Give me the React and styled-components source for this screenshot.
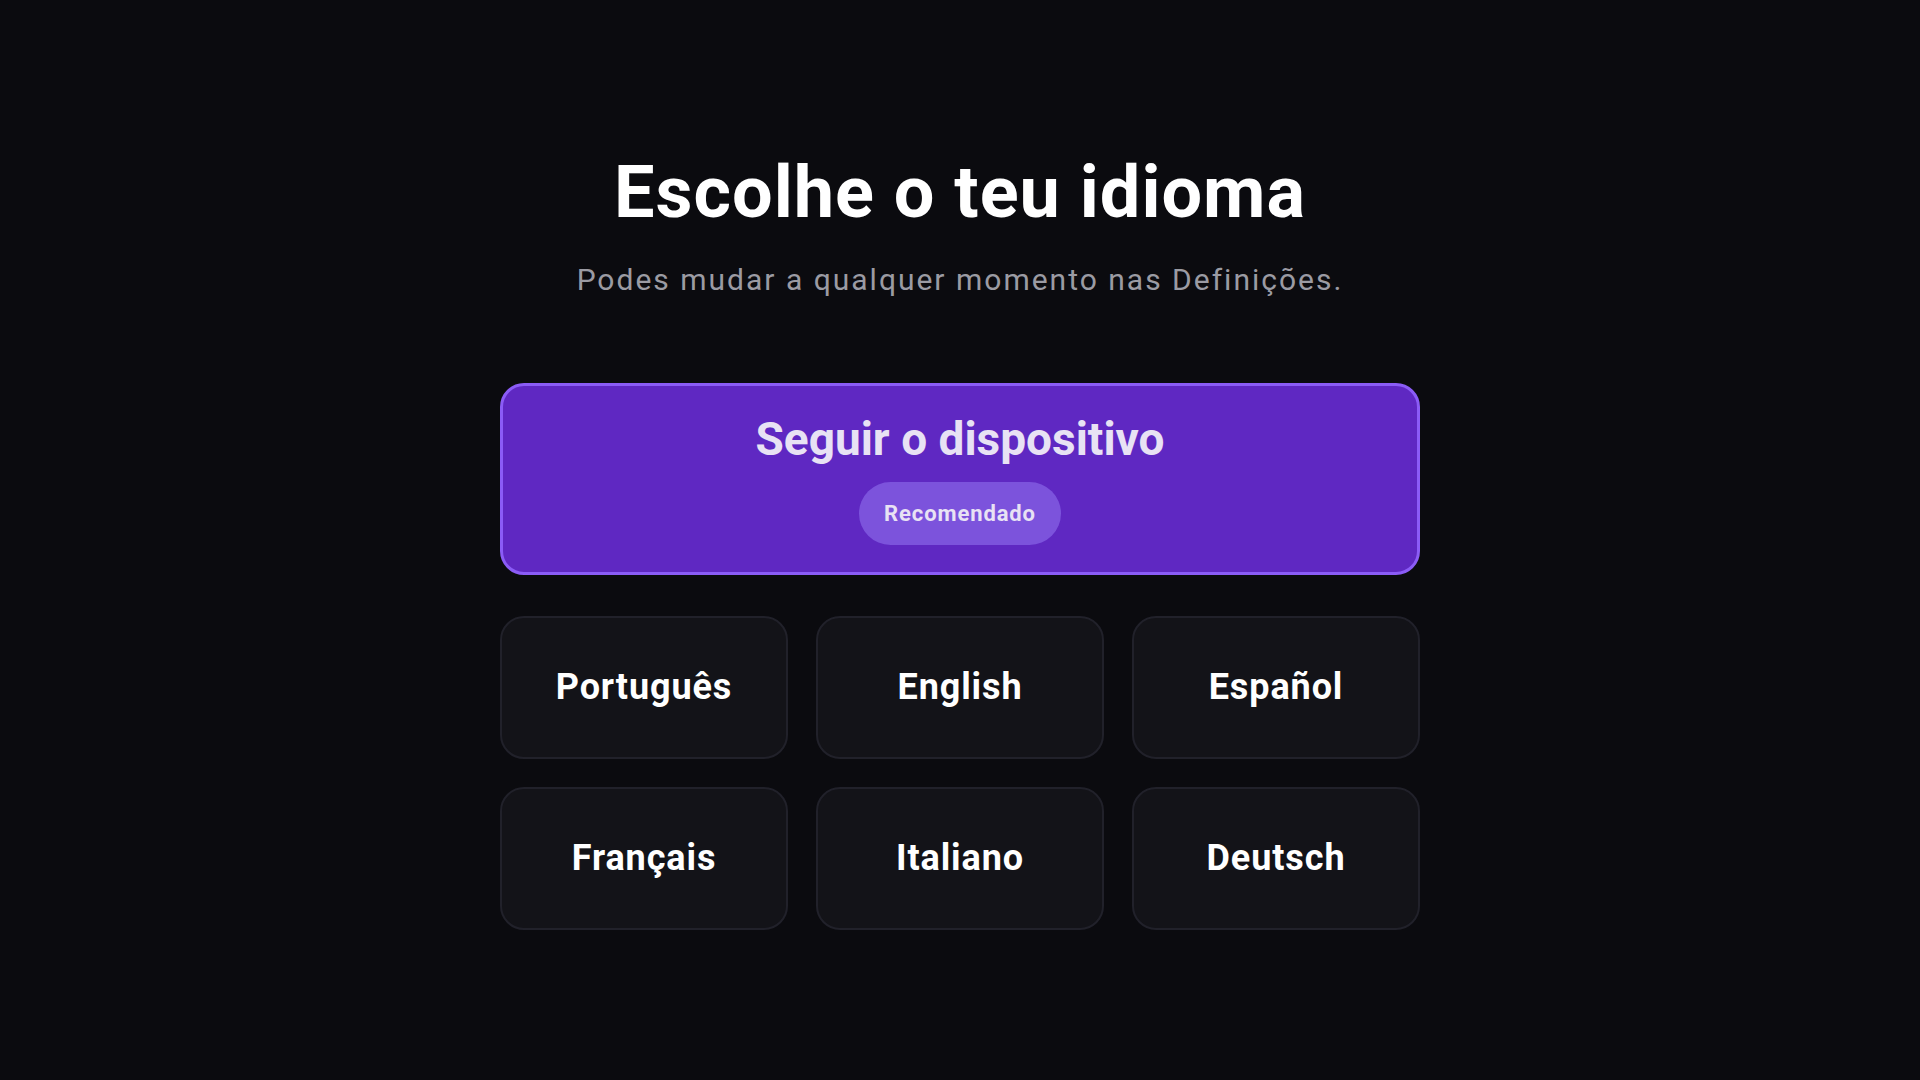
import React, { useState } from 'react';
import styled, { createGlobalStyle } from 'styled-components';

const GlobalStyle = createGlobalStyle`
  * {
    box-sizing: border-box;
  }
  html, body {
    margin: 0;
    padding: 0;
    background: #0b0b0f;
    font-family: Roboto, "Noto Sans", "Liberation Sans", sans-serif;
  }
`;

const Page = styled.main`
  min-height: 100vh;
  display: flex;
  align-items: center;
  justify-content: center;
  background: #0b0b0f;
`;

const Content = styled.section`
  width: 920px;
  display: flex;
  flex-direction: column;
  align-items: stretch;
`;

const Title = styled.h1`
  margin: 0;
  font-size: 72px;
  line-height: 1.2;
  font-weight: 700;
  letter-spacing: 1px;
  color: #ffffff;
  text-align: center;
`;

const Subtitle = styled.p`
  margin: 22px 0 0;
  font-size: 30px;
  line-height: 1.4;
  font-weight: 400;
  letter-spacing: 2px;
  color: #9b9ba3;
  text-align: center;
`;

const DeviceOption = styled.button`
  margin-top: 82px;
  height: 192px;
  display: flex;
  flex-direction: column;
  align-items: center;
  justify-content: center;
  gap: 16px;
  background: #5f28c2;
  border: 3px solid #8b5cf6;
  border-radius: 24px;
  cursor: pointer;
  font-family: inherit;
`;

const DeviceLabel = styled.span`
  font-size: 46px;
  line-height: 1.15;
  font-weight: 700;
  color: #e8e2f4;
`;

const Badge = styled.span`
  height: 63px;
  padding: 0 25px;
  display: inline-flex;
  align-items: center;
  border-radius: 32px;
  background: #7c53dc;
  color: #e8e2f4;
  font-size: 22px;
  font-weight: 700;
  letter-spacing: 0.04em;
`;

const Grid = styled.div`
  margin-top: 41px;
  display: grid;
  grid-template-columns: repeat(3, 1fr);
  gap: 28px;
`;

const LanguageCard = styled.button`
  height: 143px;
  display: flex;
  align-items: center;
  justify-content: center;
  background: ${p => (p.active ? '#1c1c24' : '#131318')};
  border: 2px solid #21212a;
  border-radius: 24px;
  color: #ffffff;
  font-family: inherit;
  font-size: 36px;
  font-weight: 700;
  letter-spacing: 0.9px;
  cursor: pointer;
`;

const languages = ['Português', 'English', 'Español', 'Français', 'Italiano', 'Deutsch'];

export default function App() {
  const [selected, setSelected] = useState('device');

  return (
    <>
      <GlobalStyle />
      <Page>
        <Content>
          <Title>Escolhe o teu idioma</Title>
          <Subtitle>Podes mudar a qualquer momento nas Definições.</Subtitle>
          <DeviceOption onClick={() => setSelected('device')}>
            <DeviceLabel>Seguir o dispositivo</DeviceLabel>
            <Badge>Recomendado</Badge>
          </DeviceOption>
          <Grid>
            {languages.map(lang => (
              <LanguageCard
                key={lang}
                active={selected === lang}
                onClick={() => setSelected(lang)}
              >
                {lang}
              </LanguageCard>
            ))}
          </Grid>
        </Content>
      </Page>
    </>
  );
}
